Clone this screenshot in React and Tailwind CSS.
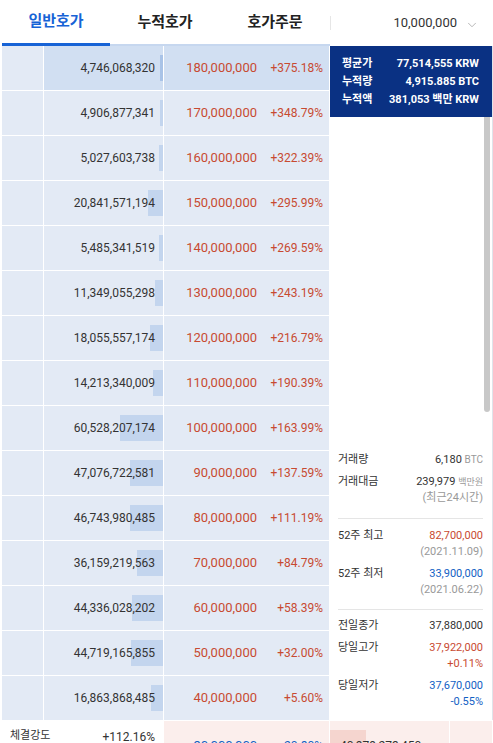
import { ChevronDown } from 'lucide-react';

const FONT = { fontFamily: 'Roboto, "Noto Sans CJK KR", sans-serif' };

const ASKS = [
  ['4,746,068,320', '180,000,000', '+375.18%'],
  ['4,906,877,341', '170,000,000', '+348.79%'],
  ['5,027,603,738', '160,000,000', '+322.39%'],
  ['20,841,571,194', '150,000,000', '+295.99%'],
  ['5,485,341,519', '140,000,000', '+269.59%'],
  ['11,349,055,298', '130,000,000', '+243.19%'],
  ['18,055,557,174', '120,000,000', '+216.79%'],
  ['14,213,340,009', '110,000,000', '+190.39%'],
  ['60,528,207,174', '100,000,000', '+163.99%'],
  ['47,076,722,581', '90,000,000', '+137.59%'],
  ['46,743,980,485', '80,000,000', '+111.19%'],
  ['36,159,219,563', '70,000,000', '+84.79%'],
  ['44,336,028,202', '60,000,000', '+58.39%'],
  ['44,719,165,855', '50,000,000', '+32.00%'],
  ['16,863,868,485', '40,000,000', '+5.60%'],
];

const MAX = 60528207174;

function AskRow({ vol, price, pct, active }) {
  const w = Math.max(3, Math.round((Number(vol.replace(/,/g, '')) / MAX) * 43));
  const bg = active ? 'bg-[#d1dff2]' : 'bg-[#e3eaf5]';
  return (
    <div className="flex gap-px h-[44px]">
      <div className="w-[41px] bg-[#e3eaf5]" />
      <div className={`relative w-[119px] ${bg} flex items-center justify-end pr-[8px]`}>
        <div
          className={`absolute right-0 top-[9px] h-[26px] ${active ? 'bg-[#a9c3e7]' : 'bg-[#c3d5ee]'}`}
          style={{ width: w }}
        />
        <span className="relative text-[12px] text-[#333]">{vol}</span>
      </div>
      <div className={`w-[165px] ${bg} flex items-center text-[#c84a31]`}>
        <span className="w-[93px] text-right text-[13px]">{price}</span>
        <span className="flex-1 text-right pr-[6px] text-[12px]">{pct}</span>
      </div>
    </div>
  );
}

function Line({ label, value, cls = 'text-[#333]', className = '' }) {
  return (
    <div className={`flex justify-between items-center h-[16px] text-[11px] ${className}`}>
      <span className="text-[#333]">{label}</span>
      <span className={cls}>{value}</span>
    </div>
  );
}

export default function App() {
  return (
    <div className="w-[493px] h-[743px] overflow-hidden bg-white" style={FONT}>
      <div className="flex h-[46px] pl-[2px]">
        <div className="flex w-[328px] border-b-2 border-[#c6d7ef]">
          <div className="w-[108px] flex items-center justify-center text-[15px] font-bold text-[#1763d6] border-b-[3px] border-[#1763d6] -mb-[2px]">
            일반호가
          </div>
          <div className="w-[110px] flex items-center justify-center text-[15px] font-semibold text-[#222]">
            누적호가
          </div>
          <div className="w-[110px] flex items-center justify-center text-[15px] font-semibold text-[#222]">
            호가주문
          </div>
        </div>
        <div className="flex-1 flex items-center">
          <div className="w-px h-[14px] bg-[#e6e6e6]" />
          <div className="flex-1 flex items-center justify-end pr-[14px] gap-[8px] text-[13px] text-[#333]">
            10,000,000
            <ChevronDown size={14} strokeWidth={1.2} className="text-[#999] mt-[3px]" />
          </div>
        </div>
      </div>

      <div className="flex gap-px bg-white pl-[2px]">
        <div className="flex flex-col gap-px w-[327px]">
          {ASKS.map((r, i) => (
            <AskRow key={i} vol={r[0]} price={r[1]} pct={r[2]} active={i === 0} />
          ))}
        </div>
        <div className="relative w-[163px] h-[674px] flex flex-col border-r border-[#dfe4ea]">
          <div className="h-[71px] bg-[#0a3183] text-white text-[11px] font-bold pt-[9px] pl-[12px] pr-[13px]">
            <div className="flex justify-between h-[18px] items-center"><span>평균가</span><span>77,514,555 KRW</span></div>
            <div className="flex justify-between h-[18px] items-center"><span>누적량</span><span>4,915.885 BTC</span></div>
            <div className="flex justify-between h-[18px] items-center"><span>누적액</span><span>381,053 백만 KRW</span></div>
          </div>
          <div className="absolute right-[2px] top-[71px] w-[6px] h-[295px] bg-[#c8c8c8] rounded-b-[3px]" />
          <div className="mt-[335px] pl-[8px] pr-[9px]">
            <Line label="거래량" value={<>6,180 <span className="text-[10px] text-[#999]">BTC</span></>} className="h-[17px]" />
            <Line label="거래대금" value={<>239,979 <span className="text-[9px] text-[#999]">백만원</span></>} className="mt-[5px]" />
            <Line label="" value="(최근24시간)" cls="text-[#999]" />
            <div className="h-px bg-[#e5e5e5] mt-[12px]" />
            <Line label="52주 최고" value="82,700,000" cls="text-[#c84a31]" className="mt-[9px]" />
            <Line label="" value="(2021.11.09)" cls="text-[#999]" />
            <Line label="52주 최저" value="33,900,000" cls="text-[#1261c4]" className="mt-[6px]" />
            <Line label="" value="(2021.06.22)" cls="text-[#999]" />
            <div className="h-px bg-[#e5e5e5] mt-[11px]" />
            <Line label="전일종가" value="37,880,000" className="mt-[8px]" />
            <Line label="당일고가" value="37,922,000" cls="text-[#c84a31]" className="mt-[6px]" />
            <Line label="" value="+0.11%" cls="text-[#c84a31]" />
            <Line label="당일저가" value="37,670,000" cls="text-[#1261c4]" className="mt-[6px]" />
            <Line label="" value="-0.55%" cls="text-[#1261c4]" />
          </div>
        </div>
      </div>

      <div className="flex gap-px h-[44px] mt-px pl-[2px]">
        <div className="w-[161px] bg-white flex items-start justify-between pl-[8px] pr-[8px] pt-[7px] text-[11px] text-[#333]">
          <span>체결강도</span>
          <span className="text-[12px]">+112.16%</span>
        </div>
        <div className="w-[165px] bg-[#fbeeec] flex items-center pt-[6px] text-[#1261c4]">
          <span className="w-[93px] text-right text-[13px]">30,000,000</span>
          <span className="flex-1 text-right pr-[6px] text-[12px]">-20.80%</span>
        </div>
        <div className="relative w-[119px] bg-[#fbeeec] flex items-center pt-[6px] pl-[10px]">
          <div className="absolute left-0 top-[9px] h-[26px] w-[36px] bg-[#f5d5cf]" />
          <span className="relative text-[12px] text-[#333]">40,979,273,450</span>
        </div>
        <div className="w-[42px] bg-[#fbeeec]" />
      </div>
    </div>
  );
}
